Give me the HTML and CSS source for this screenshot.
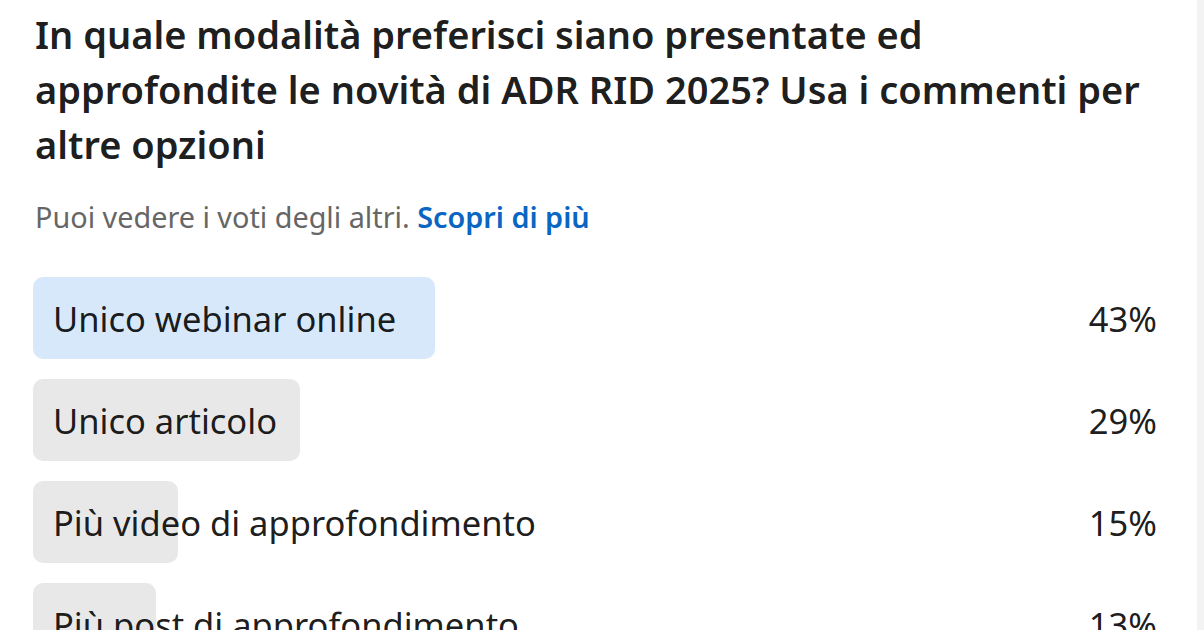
FILE: index.html
```html
<!DOCTYPE html>
<html lang="it">
<head>
<meta charset="utf-8">
<title>Sondaggio</title>
<link rel="stylesheet" href="styles.css">
</head>
<body>
<main class="poll">
  <h1 class="poll-question">In quale modalità preferisci siano presentate ed approfondite le novità di ADR RID 2025? Usa i commenti per altre opzioni</h1>
  <p class="poll-note">Puoi vedere i voti degli altri. <a class="poll-link" href="#">Scopri di più</a></p>
  <ul class="poll-options">
    <li class="poll-option">
      <div class="option-label">
        <span class="option-bar is-top" style="width: 402px"></span>
        <span class="option-text">Unico webinar online</span>
      </div>
      <span class="option-pct">43%</span>
    </li>
    <li class="poll-option">
      <div class="option-label">
        <span class="option-bar" style="width: 267px"></span>
        <span class="option-text">Unico articolo</span>
      </div>
      <span class="option-pct">29%</span>
    </li>
    <li class="poll-option">
      <div class="option-label">
        <span class="option-bar" style="width: 145px"></span>
        <span class="option-text">Più video di approfondimento</span>
      </div>
      <span class="option-pct">15%</span>
    </li>
    <li class="poll-option">
      <div class="option-label">
        <span class="option-bar" style="width: 123px"></span>
        <span class="option-text">Più post di approfondimento</span>
      </div>
      <span class="option-pct">13%</span>
    </li>
  </ul>
</main>
<div class="side-strip"></div>
</body>
</html>
```
FILE: styles.css
```css
html, body {
  margin: 0;
  padding: 0;
  height: 100%;
  overflow: hidden;
  background: #ffffff;
}

body {
  display: flex;
  font-family: "Noto Sans", "Open Sans", sans-serif;
  color: rgba(0, 0, 0, 0.9);
}

.poll {
  flex: 1;
  padding: 7px 40px 0 35px;
  min-width: 0;
}

.side-strip {
  width: 7px;
  background: #f3f3f3;
  flex: none;
}

.poll-question {
  margin: 0;
  font-size: 38px;
  line-height: 55px;
  font-weight: 600;
  color: rgba(0, 0, 0, 0.9);
}

.poll-note {
  margin: 27px 0 0;
  font-size: 28.8px;
  line-height: 36px;
  color: #666666;
}

.poll-link {
  color: #0a66c2;
  font-weight: 600;
  text-decoration: none;
}

.poll-options {
  list-style: none;
  margin: 42px 0 0 -2px;
  padding: 0;
  display: flex;
  flex-direction: column;
  gap: 20px;
}

.poll-option {
  display: flex;
  align-items: center;
  height: 82px;
}

.option-label {
  position: relative;
  flex: 1;
  height: 100%;
  display: flex;
  align-items: center;
}

.option-bar {
  position: absolute;
  left: 0;
  top: 0;
  bottom: 0;
  border-radius: 10px;
  background: #e8e8e8;
}

.option-bar.is-top {
  background: #d7e8fa;
}

.option-text {
  position: relative;
  padding-left: 20px;
  font-size: 34.5px;
  color: rgba(0, 0, 0, 0.9);
}

.option-pct {
  font-size: 34.5px;
  color: rgba(0, 0, 0, 0.9);
}
```
